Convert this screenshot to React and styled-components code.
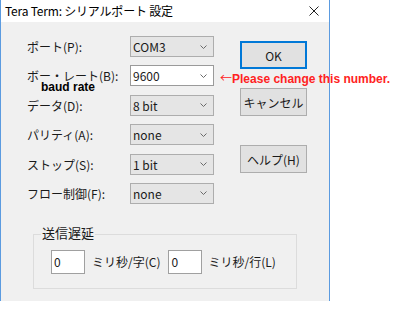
import React from "react";
import styled, { createGlobalStyle } from "styled-components";

const Global = createGlobalStyle`
  html, body { margin: 0; padding: 0; background: #ffffff; }
  body { font-family: "Noto Sans CJK JP", "Noto Sans", sans-serif; }
`;

const Page = styled.div`
  position: relative;
  width: 400px;
  height: 309px;
  overflow: hidden;
  background: #ffffff;
`;

const Window = styled.div`
  width: 330px;
  height: 301px;
  box-sizing: border-box;
  border-left: 1px solid #5b9be0;
  border-right: 1px solid #5b9be0;
  display: flex;
  flex-direction: column;
`;

const TitleBar = styled.div`
  height: 22px;
  flex: none;
  background: #ffffff;
  display: flex;
  align-items: center;
  justify-content: space-between;
  padding: 0 10px 0 4px;
  font-size: 12px;
  color: #000;
`;

const TitleText = styled.span`
  line-height: 22px;
  letter-spacing: -0.2px;
`;

const Body = styled.div`
  flex: 1;
  background: #f0f0f0;
  padding: 14px 0 0 26px;
  display: flex;
  flex-direction: column;
`;

const MainRow = styled.div`
  display: flex;
  align-items: flex-start;
`;

const FieldGrid = styled.div`
  display: grid;
  grid-template-columns: 103px 84px;
  grid-auto-rows: 21px;
  row-gap: 8.4px;
  align-items: center;
`;

const Label = styled.span`
  font-size: 12px;
  color: #1a1a1a;
  white-space: nowrap;
  line-height: 21px;
`;

const Combo = styled.div`
  height: 21px;
  box-sizing: border-box;
  border: 1px solid ${(p) => (p.$editable ? "#9a9a9a" : "#adadad")};
  background: ${(p) => (p.$editable ? "#ffffff" : "#e5e5e5")};
  display: flex;
  align-items: center;
  justify-content: space-between;
  padding: 0 6px 0 2px;
  font-size: 12px;
  color: #1a1a1a;
`;

const ButtonColumn = styled.div`
  margin-left: 26px;
  padding-top: 5px;
  display: flex;
  flex-direction: column;
`;

const Button = styled.div`
  width: 67px;
  height: 28px;
  box-sizing: border-box;
  margin-top: ${(p) => p.$mt || 0}px;
  background: #e1e1e1;
  border: 1px solid ${(p) => (p.$default ? "#0078d7" : "#adadad")};
  box-shadow: ${(p) => (p.$default ? "inset 0 0 0 1px #0078d7" : "none")};
  display: flex;
  align-items: center;
  justify-content: center;
  font-size: 12px;
  color: #1a1a1a;
`;

const Group = styled.fieldset`
  margin: 21px 0 0 6px;
  padding: 5px 0 14px 0;
  width: 264px;
  box-sizing: border-box;
  border: 1px solid #dcdcdc;
  min-width: 0;
`;

const Legend = styled.legend`
  margin-left: 7px;
  padding: 0 1px 4px 1px;
  font-size: 13px;
  line-height: 16px;
  color: #1a1a1a;
`;

const DelayRow = styled.div`
  display: flex;
  align-items: center;
  padding-left: 17px;
`;

const Edit = styled.div`
  width: 34px;
  height: 24px;
  box-sizing: border-box;
  border: 1px solid #a0a0a0;
  background: #ffffff;
  padding-left: 2px;
  font-size: 12px;
  line-height: 22px;
  color: #1a1a1a;
  margin-right: ${(p) => p.$mr || 0}px;
`;

const DelayText = styled.span`
  font-size: 12px;
  color: #1a1a1a;
  white-space: nowrap;
  margin-right: ${(p) => p.$mr || 0}px;
`;

const RedNote = styled.div`
  position: absolute;
  left: 220px;
  top: 72px;
  display: flex;
  align-items: baseline;
  font-family: "Liberation Sans", Arial, sans-serif;
  font-weight: bold;
  font-size: 12px;
  line-height: 12px;
  color: #ff2222;
  white-space: nowrap;
`;

const Arrow = styled.span`
  font-family: "Noto Sans CJK JP", sans-serif;
  font-weight: normal;
  font-size: 12px;
  margin-right: 0px;
`;

const BaudNote = styled.div`
  position: absolute;
  left: 41px;
  top: 81px;
  font-family: "Liberation Sans", Arial, sans-serif;
  font-weight: bold;
  font-size: 12px;
  line-height: 12px;
  color: #000;
  white-space: nowrap;
`;

const Chevron = () => (
  <svg width="7" height="4" viewBox="0 0 7 4">
    <polyline points="0.5,0.5 3.5,3.5 6.5,0.5" fill="none" stroke="#6a6a6a" strokeWidth="1" />
  </svg>
);

const CloseIcon = () => (
  <svg width="10" height="10" viewBox="0 0 10 10">
    <path d="M0.5 0.5 L9.5 9.5 M9.5 0.5 L0.5 9.5" stroke="#222" strokeWidth="1" fill="none" />
  </svg>
);

const fields = [
  { label: "ポート(P):", value: "COM3" },
  { label: "ボー・レート(B):", value: "9600", editable: true },
  { label: "データ(D):", value: "8 bit" },
  { label: "パリティ(A):", value: "none" },
  { label: "ストップ(S):", value: "1 bit" },
  { label: "フロー制御(F):", value: "none" },
];

export default function App() {
  return (
    <Page>
      <Global />
      <Window>
        <TitleBar>
          <TitleText>Tera Term: シリアルポート 設定</TitleText>
          <CloseIcon />
        </TitleBar>
        <Body>
          <MainRow>
            <FieldGrid>
              {fields.map((f) => (
                <React.Fragment key={f.label}>
                  <Label>{f.label}</Label>
                  <Combo $editable={f.editable}>
                    <span>{f.value}</span>
                    <Chevron />
                  </Combo>
                </React.Fragment>
              ))}
            </FieldGrid>
            <ButtonColumn>
              <Button $default>OK</Button>
              <Button $mt={19}>キャンセル</Button>
              <Button $mt={29}>ヘルプ(H)</Button>
            </ButtonColumn>
          </MainRow>
          <Group>
            <Legend>送信遅延</Legend>
            <DelayRow>
              <Edit $mr={7}>0</Edit>
              <DelayText $mr={8}>ミリ秒/字(C)</DelayText>
              <Edit $mr={6}>0</Edit>
              <DelayText>ミリ秒/行(L)</DelayText>
            </DelayRow>
          </Group>
        </Body>
      </Window>
      <RedNote>
        <Arrow>←</Arrow>
        <span>Please change this number.</span>
      </RedNote>
      <BaudNote>baud rate</BaudNote>
    </Page>
  );
}
